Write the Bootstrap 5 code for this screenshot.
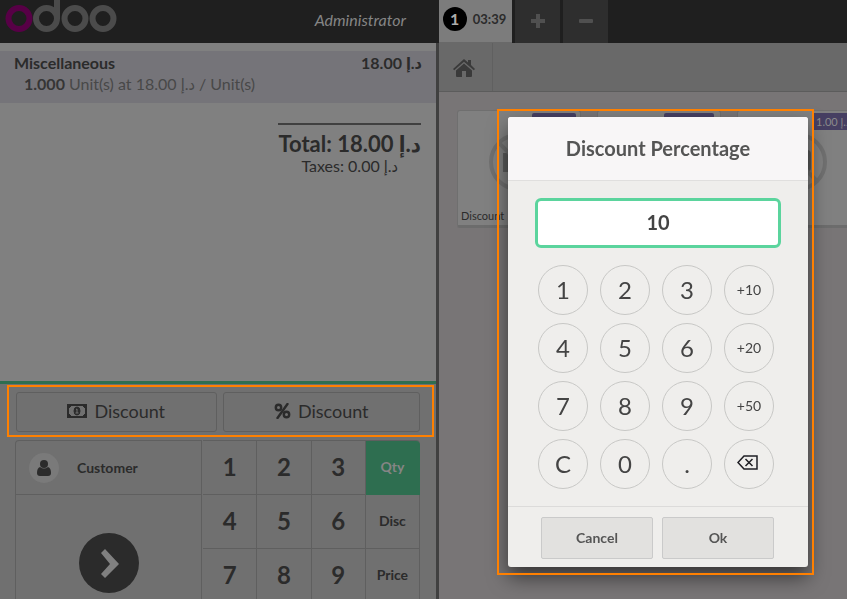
<!DOCTYPE html>
<html lang="en">
<head>
<meta charset="utf-8">
<meta name="viewport" content="width=device-width, initial-scale=1">
<title>Point of Sale</title>
<link href="https://cdn.jsdelivr.net/npm/bootstrap@5.3.0/dist/css/bootstrap.min.css" rel="stylesheet">
<style>
body{font-family:Lato,"DejaVu Sans Condensed","DejaVu Sans",sans-serif;font-size:16px;line-height:20px;color:#2b2b2b;background:#787576}
button{font-family:inherit;color:inherit;padding:0}
.topbar{height:43px;background:#1f1f1f}
.brand-side{width:439px;padding:0 33px 4px 5px}
.brand-side em{color:#858585}
.order-tab{width:73px;background:#7c7c7c;border:0;border-bottom:1px solid #696969;margin-right:3px;gap:6px;font-size:13px;font-weight:700;line-height:16px;padding-right:2px}
.order-no{width:24px;height:24px;background:#000;color:#aaa;font-size:16px;line-height:24px}
.tab-tool{width:45px;background:#2e2e2e;border:0;margin-right:3px;padding-bottom:4px}
.order-pane{width:439px;border-right:3px solid #404040;background:#808080}
.order-line{margin-top:8px;padding:1px 14px 9px;background:#757479;line-height:21px}
.line-info{padding-left:10px;color:#484848}
.line-info b{color:#353535}
.totals{margin:20px 15px 0 0;border-top:2px solid #404040;padding-top:6px;text-align:center}
.total-sum{font-size:22px;font-weight:700;line-height:25px}
.control-area{border-top:3px solid #2e6e50;background:#707070;padding:1px 2px 0 7px;height:218px}
.marked{border:2px solid #ff8000}
.control-row{padding:5px 12px 3px 7px;gap:6px}
.control-btn{height:40px;border:1px solid #5f5f5f;border-radius:3px;background:transparent;font-size:18px;gap:7px;padding-bottom:2px}
.pads{margin:3px 14px 0 8px;gap:1px}
.action-pad{width:187px;border:1px solid #5f5f5f;border-bottom:0;border-top-left-radius:4px}
.customer{height:54px;border:0;border-bottom:1px solid #5f5f5f;background:transparent;padding-left:13px;gap:18px;font-size:14px;font-weight:700}
.avatar{width:30px;height:30px;background:#7a7a7a}
.pay{height:136px;border:0;background:transparent}
.pay-disc{width:60px;height:60px;background:#2b2b2b}
.number-pad{display:grid;grid-template-columns:repeat(4,1fr);grid-auto-rows:54px;border-top:1px solid #5f5f5f;border-top-right-radius:4px}
.number-pad button{border:0;border-right:1px solid #5f5f5f;border-bottom:1px solid #5f5f5f;background:transparent;font-size:24px;font-weight:700;padding-bottom:2px}
.number-pad .mode{font-size:14px}
.number-pad .mode-on{background:#2e6e50;border-color:#2e6e50;color:#858585;border-top-right-radius:4px}
.crumbs{height:49px;background:#696969;border-bottom:1px solid #5c5c5c}
.home{width:54px;border:0;border-right:1px solid #606060;background:transparent;color:#3a3a3a;padding-right:4px}
.products{padding:18px 0 0 18px;gap:16px}
.product{position:relative;flex:0 0 124px;height:118px;background:#808080;border:1px solid #6f6f6f;border-bottom:3px solid #6c6c6c;border-radius:3px;font-size:11px;line-height:13px}
.price{position:absolute;top:2px;right:4px;height:17px;min-width:44px;padding:0 4px;background:#463f62;color:#8b8b8b;border-radius:2px;line-height:17px;white-space:nowrap}
.wide-price{right:6px;min-width:50px}
.photo{position:absolute;left:31px;top:22px}
.product-name{position:absolute;left:3px;bottom:3px}
.popup-layer{position:fixed;inset:0;padding:109px 33px 0;z-index:10}
.popup-mark{position:relative;padding:8px 6px 8px 11px}
.popup-mark::after{content:"";position:absolute;inset:0;border:2px solid #ff8000;pointer-events:none}
.popup-box{width:300px;background:#efeeec;border-radius:3px;box-shadow:0 10px 20px rgba(0,0,0,.55);overflow:hidden}
.popup-title{margin:0;padding:20px 0 20px;background:#f8f6f7;border-bottom:1px solid #e0dfde;font-size:20px;line-height:23px;font-weight:700;color:#555}
.amount{width:246px;height:50px;margin:17px auto;padding:0 2px 2px;border:3px solid #5bd49d;border-radius:6px;background:#fff;font-size:20px;font-weight:700;color:#444;outline:0}
.keys{display:grid;grid-template-columns:repeat(4,50px);gap:8px 12px;padding:0 0 17px 30px}
.keys button{height:50px;border:1px solid #c8c8c6;border-radius:50%;background:transparent;font-size:24px;color:#444}
.keys .step{font-size:14px}
.keys .step svg{margin:0 4px 4px 0}
.popup-foot{border-top:1px solid #dcdbda;padding:10px 34px 8px 33px;gap:9px}
.popup-foot button{height:42px;border:1px solid #cacaca;border-radius:2px;background:#e2e1df;font-size:14px;font-weight:700;color:#555}
</style>
<script src="https://cdn.jsdelivr.net/npm/bootstrap@5.3.0/dist/js/bootstrap.bundle.min.js"></script>
</head>
<body class="vh-100 d-flex flex-column overflow-hidden">
<header class="topbar d-flex flex-shrink-0">
  <div class="brand-side d-flex justify-content-between align-items-center flex-shrink-0">
    <svg class="align-self-start" width="112" height="34" viewBox="0 0 112 34" fill="none" stroke-width="6" role="img" aria-label="odoo">
      <g stroke="#4b4b4b"><circle cx="41.500" cy="18.500" r="10.500"/><path d="M52 0v19"/><circle cx="70" cy="18.500" r="10.500"/><circle cx="98" cy="18.500" r="10.500"/></g>
      <circle cx="14" cy="18.500" r="10.500" stroke="#570046"/>
    </svg>
    <em>Administrator</em>
  </div>
  <button class="order-tab d-flex align-items-center justify-content-center pb-1"><span class="order-no rounded-circle">1</span>03:39</button>
  <button class="tab-tool" aria-label="New order"><svg width="14" height="14" viewBox="0 0 14 14"><path d="M5 0h4v5h5v4H9v5H5V9H0V5h5z" fill="#505050"/></svg></button>
  <button class="tab-tool" aria-label="Delete order"><svg width="14" height="14" viewBox="0 0 14 14"><rect y="5" width="14" height="4" rx="1" fill="#505050"/></svg></button>
</header>
<main class="d-flex flex-grow-1 overflow-hidden">
  <section class="order-pane d-flex flex-column flex-shrink-0">
    <div class="flex-grow-1">
      <div class="order-line">
        <div class="d-flex justify-content-between fw-bold"><span>Miscellaneous</span><span>18.00 د.إ</span></div>
        <div class="line-info"><b>1.000</b> Unit(s) at 18.00 د.إ / Unit(s)</div>
      </div>
      <div class="d-flex justify-content-end"><div class="totals"><div class="total-sum">Total: 18.00 د.إ</div><div>Taxes: 0.00 د.إ</div></div></div>
    </div>
    <div class="control-area flex-shrink-0 overflow-hidden">
      <div class="control-row marked d-flex">
        <button class="control-btn flex-fill d-flex justify-content-center align-items-center">
          <svg width="20" height="14" viewBox="0 0 20 14" fill="none" stroke="#2b2b2b"><rect x="1" y="1" width="18" height="12" stroke-width="2"/><path d="M2 2h2l-2 2zM18 2h-2l2 2zM2 12h2l-2-2zM18 12h-2l2-2z" fill="#2b2b2b"/><ellipse cx="10" cy="7" rx="3" ry="4" fill="#2b2b2b"/><path d="M9 5.500l1-.5v4M8.500 9h3" stroke="#707070"/></svg>Discount</button>
        <button class="control-btn flex-fill d-flex justify-content-center align-items-center">
          <svg width="17" height="16" viewBox="0 0 17 16" fill="none" stroke="#2b2b2b"><circle cx="4.500" cy="4.500" r="2.700" stroke-width="2.400"/><circle cx="12.500" cy="11.500" r="2.700" stroke-width="2.400"/><path d="M13.500 1L3.500 15" stroke-width="2.400" stroke-linecap="round"/></svg>Discount</button>
      </div>
      <div class="pads d-flex">
        <div class="action-pad flex-shrink-0">
          <button class="customer w-100 d-flex align-items-center"><span class="avatar rounded-circle d-flex align-items-center justify-content-center"><svg width="14" height="16" viewBox="0 0 14 16" fill="#2b2b2b"><circle cx="7" cy="4" r="4"/><path d="M3 7q4 3 8 0q3 1 3 6q0 3-3 3H3q-3 0-3-3q0-5 3-6z"/></svg></span>Customer</button>
          <button class="pay w-100 d-flex align-items-center justify-content-center" aria-label="Payment"><span class="pay-disc rounded-circle d-flex align-items-center justify-content-center"><svg width="20" height="30" viewBox="0 0 20 30" fill="#808080"><path d="M6 1L20 16 6 30 2 26 11 16 2 5z"/></svg></span></button>
        </div>
        <div class="number-pad flex-grow-1">
          <button>1</button><button>2</button><button>3</button><button class="mode mode-on">Qty</button>
          <button>4</button><button>5</button><button>6</button><button class="mode">Disc</button>
          <button>7</button><button>8</button><button>9</button><button class="mode">Price</button>
        </div>
      </div>
    </div>
  </section>
  <section class="flex-grow-1 overflow-hidden">
    <nav class="crumbs d-flex"><button class="home" aria-label="Home"><svg width="22" height="19" viewBox="0 0 22 19" fill="currentColor"><path d="M11 0l4 3.500V1h3v5l4 4-1.200 1.300L11 2.700 1.200 11.300 0 10z"/><path d="M11 4.500l8 7V17q0 1-1 1h-5v-6H9v6H4q-1 0-1-1v-5.500z"/></svg></button></nav>
    <div class="products d-flex">
      <article class="product"><svg class="photo" width="58" height="58" viewBox="0 0 58 58" fill="none" stroke="#707070" stroke-width="4"><rect x="14" y="20" width="32" height="19" fill="#5c5c5c" stroke="none"/><circle cx="29" cy="29" r="27"/><path d="M10 10l38 38"/></svg><span class="price"></span><span class="product-name">Discount</span></article>
      <article class="product"><span class="price wide-price"></span></article>
      <article class="product"><svg class="photo" width="58" height="58" viewBox="0 0 58 58" fill="none" stroke="#707070" stroke-width="4"><rect x="12" y="17" width="30" height="22" rx="4" fill="#5c5c5c" stroke="none"/><circle cx="29" cy="29" r="27"/><path d="M10 10l38 38"/></svg><span class="price">1.00 د.إ</span></article>
    </div>
  </section>
</main>
<div class="popup-layer d-flex justify-content-end align-items-start">
  <div class="popup-mark">
    <div class="popup-box" role="dialog" aria-labelledby="popup-title">
      <h1 class="popup-title text-center" id="popup-title">Discount Percentage</h1>
      <input class="amount d-block text-center" type="text" value="10" aria-labelledby="popup-title">
      <div class="keys">
        <button>1</button><button>2</button><button>3</button><button class="step">+10</button>
        <button>4</button><button>5</button><button>6</button><button class="step">+20</button>
        <button>7</button><button>8</button><button>9</button><button class="step">+50</button>
        <button>C</button><button>0</button><button>.</button>
        <button class="step" aria-label="Backspace"><svg width="21" height="15" viewBox="0 0 21 15" fill="none" stroke="#1f1f24" stroke-width="1.500"><path d="M7 1h13v13H7L1 7.500z"/><path d="M8.500 4l7 7M15.500 4l-7 7"/></svg></button>
      </div>
      <div class="popup-foot d-flex"><button class="w-50">Cancel</button><button class="w-50">Ok</button></div>
    </div>
  </div>
</div>
</body>
</html>
